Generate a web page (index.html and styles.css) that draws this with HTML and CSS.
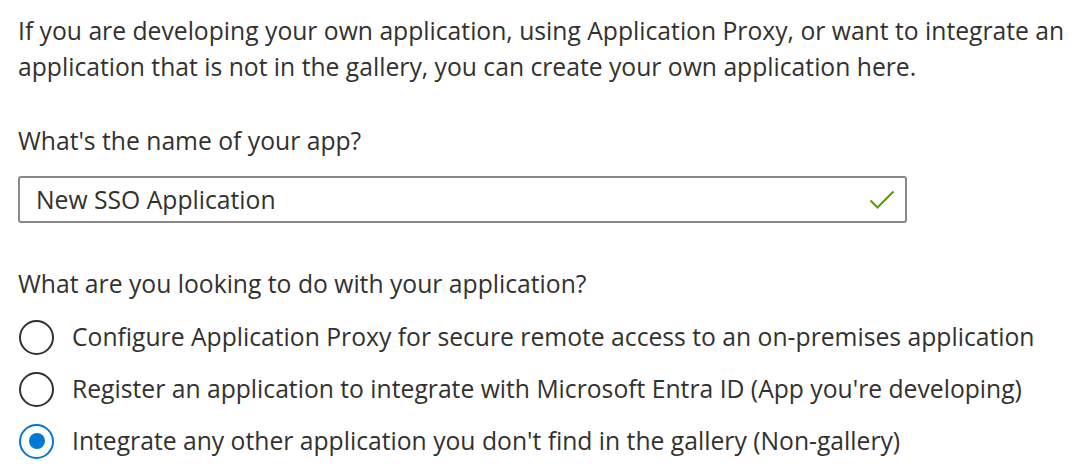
FILE: index.html
```html
<!DOCTYPE html>
<html>
<head>
<meta charset="utf-8">
<link rel="stylesheet" href="styles.css">
</head>
<body>
<div class="page">
  <p class="intro">If you are developing your own application, using Application Proxy, or want to integrate an application that is not in the gallery, you can create your own application here.</p>
  <div class="field-label">What's the name of your app?</div>
  <div class="input">
    <span class="input-text">New SSO Application</span>
    <svg class="check" width="26" height="20" viewBox="0 0 26 20"><path d="M1.5 10.5 L8.5 17.5 L24.5 1.5" fill="none" stroke="#57a300" stroke-width="2.2"/></svg>
  </div>
  <div class="field-label q2">What are you looking to do with your application?</div>
  <div class="radios">
    <div class="radio-row"><span class="radio"></span><span class="radio-label">Configure Application Proxy for secure remote access to an on-premises application</span></div>
    <div class="radio-row"><span class="radio"></span><span class="radio-label">Register an application to integrate with Microsoft Entra ID (App you're developing)</span></div>
    <div class="radio-row"><span class="radio checked"></span><span class="radio-label">Integrate any other application you don't find in the gallery (Non-gallery)</span></div>
  </div>
</div>
</body>
</html>
```
FILE: styles.css
```css
html, body {
  margin: 0;
  padding: 0;
  background: #ffffff;
}
.page {
  padding: 13px 0 0 18px;
  font-family: "Open Sans", "Noto Sans", sans-serif;
  font-size: 24.7px;
  line-height: 36px;
  color: #323130;
}
.intro {
  margin: 0;
  width: 1060px;
}
.field-label {
  margin-top: 38px;
}
.input {
  margin-top: 17px;
  box-sizing: border-box;
  width: 889px;
  height: 47px;
  border: 2px solid #8a8886;
  border-radius: 3px;
  display: flex;
  align-items: center;
  justify-content: space-between;
  padding: 0 10px 0 16px;
}
.input-text {
  line-height: 36px;
}
.check {
  display: block;
}
.q2 {
  margin-top: 43px;
}
.radios {
  margin-top: 9px;
  display: flex;
  flex-direction: column;
}
.radio-row {
  height: 52px;
  display: flex;
  align-items: center;
}
.radio {
  box-sizing: border-box;
  width: 35px;
  height: 35px;
  border-radius: 50%;
  border: 2px solid #323130;
  margin-left: 1px;
  margin-right: 18px;
  display: flex;
  align-items: center;
  justify-content: center;
  flex: none;
}
.radio.checked {
  border-color: #0078d4;
}
.radio.checked::after {
  content: "";
  width: 16px;
  height: 16px;
  border-radius: 50%;
  background: #0078d4;
}
.radio-label {
  white-space: nowrap;
}
```
